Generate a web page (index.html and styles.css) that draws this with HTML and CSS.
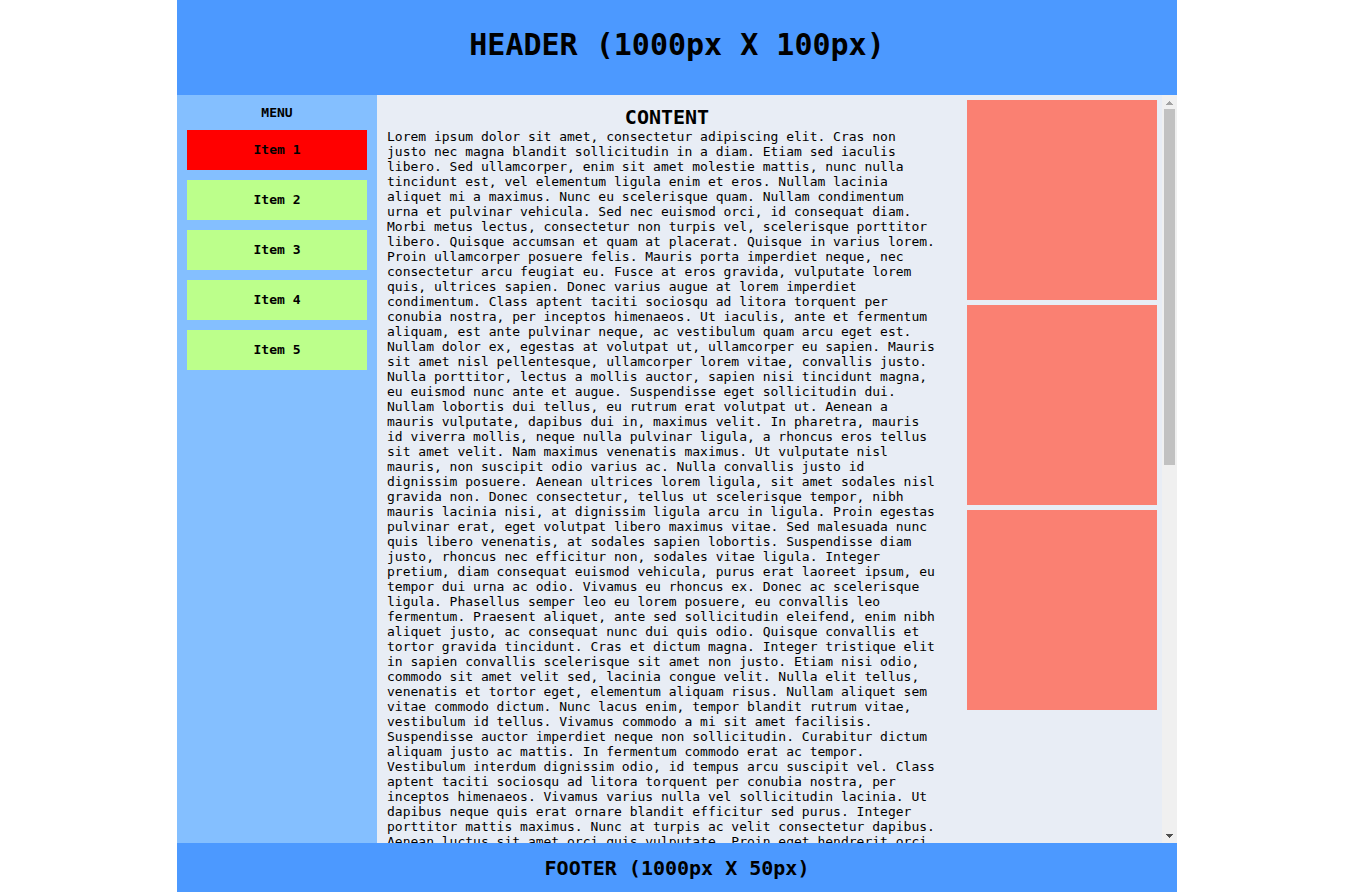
FILE: index.html
```html
<!DOCTYPE html>
<html lang="en">
<head>
<meta charset="utf-8">
<title>Layout</title>
<link rel="stylesheet" href="styles.css">
</head>
<body>
<div class="page">
<header class="header"><h1 class="header-title">HEADER (1000px X 100px)</h1></header>
<div class="main">
<nav class="menu" aria-labelledby="menu-title">
<h2 class="menu-title" id="menu-title">MENU</h2>
<a class="item item-active" href="#item1">Item 1</a>
<a class="item" href="#item2">Item 2</a>
<a class="item" href="#item3">Item 3</a>
<a class="item" href="#item4">Item 4</a>
<a class="item" href="#item5">Item 5</a>
</nav>
<div class="scroller">
<main class="content">
<h2 class="content-title">CONTENT</h2>
<p class="text">Lorem ipsum dolor sit amet, consectetur adipiscing elit. Cras non
justo nec magna blandit sollicitudin in a diam. Etiam sed iaculis
libero. Sed ullamcorper, enim sit amet molestie mattis, nunc nulla
tincidunt est, vel elementum ligula enim et eros. Nullam lacinia
aliquet mi a maximus. Nunc eu scelerisque quam. Nullam condimentum
urna et pulvinar vehicula. Sed nec euismod orci, id consequat diam.
Morbi metus lectus, consectetur non turpis vel, scelerisque porttitor
libero. Quisque accumsan et quam at placerat. Quisque in varius lorem.
Proin ullamcorper posuere felis. Mauris porta imperdiet neque, nec
consectetur arcu feugiat eu. Fusce at eros gravida, vulputate lorem
quis, ultrices sapien. Donec varius augue at lorem imperdiet
condimentum. Class aptent taciti sociosqu ad litora torquent per
conubia nostra, per inceptos himenaeos. Ut iaculis, ante et fermentum
aliquam, est ante pulvinar neque, ac vestibulum quam arcu eget est.
Nullam dolor ex, egestas at volutpat ut, ullamcorper eu sapien. Mauris
sit amet nisl pellentesque, ullamcorper lorem vitae, convallis justo.
Nulla porttitor, lectus a mollis auctor, sapien nisi tincidunt magna,
eu euismod nunc ante et augue. Suspendisse eget sollicitudin dui.
Nullam lobortis dui tellus, eu rutrum erat volutpat ut. Aenean a
mauris vulputate, dapibus dui in, maximus velit. In pharetra, mauris
id viverra mollis, neque nulla pulvinar ligula, a rhoncus eros tellus
sit amet velit. Nam maximus venenatis maximus. Ut vulputate nisl
mauris, non suscipit odio varius ac. Nulla convallis justo id
dignissim posuere. Aenean ultrices lorem ligula, sit amet sodales nisl
gravida non. Donec consectetur, tellus ut scelerisque tempor, nibh
mauris lacinia nisi, at dignissim ligula arcu in ligula. Proin egestas
pulvinar erat, eget volutpat libero maximus vitae. Sed malesuada nunc
quis libero venenatis, at sodales sapien lobortis. Suspendisse diam
justo, rhoncus nec efficitur non, sodales vitae ligula. Integer
pretium, diam consequat euismod vehicula, purus erat laoreet ipsum, eu
tempor dui urna ac odio. Vivamus eu rhoncus ex. Donec ac scelerisque
ligula. Phasellus semper leo eu lorem posuere, eu convallis leo
fermentum. Praesent aliquet, ante sed sollicitudin eleifend, enim nibh
aliquet justo, ac consequat nunc dui quis odio. Quisque convallis et
tortor gravida tincidunt. Cras et dictum magna. Integer tristique elit
in sapien convallis scelerisque sit amet non justo. Etiam nisi odio,
commodo sit amet velit sed, lacinia congue velit. Nulla elit tellus,
venenatis et tortor eget, elementum aliquam risus. Nullam aliquet sem
vitae commodo dictum. Nunc lacus enim, tempor blandit rutrum vitae,
vestibulum id tellus. Vivamus commodo a mi sit amet facilisis.
Suspendisse auctor imperdiet neque non sollicitudin. Curabitur dictum
aliquam justo ac mattis. In fermentum commodo erat ac tempor.
Vestibulum interdum dignissim odio, id tempus arcu suscipit vel. Class
aptent taciti sociosqu ad litora torquent per conubia nostra, per
inceptos himenaeos. Vivamus varius nulla vel sollicitudin lacinia. Ut
dapibus neque quis erat ornare blandit efficitur sed purus. Integer
porttitor mattis maximus. Nunc at turpis ac velit consectetur dapibus.
Aenean luctus sit amet orci quis vulputate. Proin eget hendrerit orci.</p>
</main>
<aside class="side">
<div class="box"></div>
<div class="box"></div>
<div class="box"></div>
</aside>
</div>
<div class="bar" aria-hidden="true">
<svg class="arrow" viewBox="0 0 7 4" shape-rendering="crispEdges"><path d="M3 0h1v1h1v1h1v1h1v1H0V3h1V2h1V1h1z" fill="#a3a3a3"/></svg>
<div class="track"><div class="thumb"></div></div>
<svg class="arrow" viewBox="0 0 7 4" shape-rendering="crispEdges"><path d="M0 0h7v1H6v1H5v1H4v1H3V3H2V2H1V1H0z" fill="#505050"/></svg>
</div>
</div>
<footer class="footer"><h2 class="footer-title">FOOTER (1000px X 50px)</h2></footer>
</div>
</body>
</html>
```
FILE: styles.css
```css
* {
  box-sizing: border-box;
}

body {
  margin: 0;
  padding-right: 4px;
  background: #fff;
  color: #000;
  font: 13px/15px "DejaVu Sans Mono", monospace;
}

h1, h2, p {
  margin: 0;
}

.page {
  display: flex;
  flex-direction: column;
  max-width: 1000px;
  height: 100vh;
  margin: 0 auto;
}

.header,
.footer {
  flex: none;
  background: #4c99ff;
  text-align: center;
}

.header {
  padding: 27px 0 33px;
}

.header-title {
  font-size: 30px;
  line-height: 35px;
}

.footer {
  padding: 13px 0 12px;
}

.footer-title,
.content-title {
  font-size: 20px;
  line-height: 24px;
  text-align: center;
}

.text {
  white-space: pre-line;
}

.main {
  display: flex;
  flex: 1;
  min-height: 0;
}

.menu {
  display: flex;
  flex: none;
  flex-direction: column;
  gap: 10px;
  width: 200px;
  padding: 10px;
  background: #84bfff;
}

.menu-title {
  font-size: 13px;
  line-height: 15px;
  text-align: center;
}

.item {
  background: #bcff8b;
  color: #000;
  font-weight: bold;
  line-height: 40px;
  text-align: center;
  text-decoration: none;
}

.item-active {
  background: #f00;
}

.scroller {
  display: flex;
  flex: 1;
  align-items: flex-start;
  overflow: hidden;
  background: #e8edf5;
}

.content {
  flex: 1;
  padding: 10px;
}

.side {
  display: flex;
  flex: none;
  flex-direction: column;
  gap: 5px;
  width: 205px;
  padding: 5px 5px 5px 10px;
}

.box {
  height: 200px;
  background: #fa8072;
}

.bar {
  display: flex;
  flex: none;
  flex-direction: column;
  align-items: center;
  gap: 4px;
  width: 15px;
  padding: 6px 0 5px;
  background: #f0f0f0;
}

.arrow {
  width: 7px;
  height: 4px;
}

.track {
  flex: 1;
  width: 11px;
}

.thumb {
  height: 49.4%;
  background: #c1c1c1;
}
```
